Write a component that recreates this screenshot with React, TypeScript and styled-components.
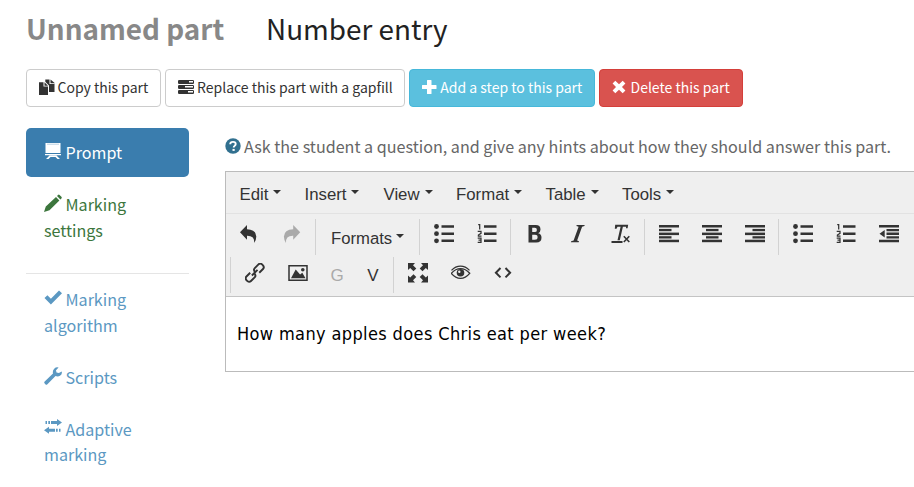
import React from 'react';
import styled, { createGlobalStyle, css } from 'styled-components';

const Global = createGlobalStyle`
  * { box-sizing: border-box; }
  html, body { margin: 0; padding: 0; background: #fff; overflow: hidden; }
  body { font-family: 'Noto Sans CJK SC', 'Open Sans', sans-serif; color: #333; }
`;

const Page = styled.div`
  width: 914px;
  height: 487px;
  padding: 8px 0 0 26px;
  overflow: hidden;
`;

const Header = styled.header`
  display: flex;
  height: 40px;
  gap: 42px;
  align-items: center;
  font-size: 27.85px;
  line-height: 40px;
  white-space: nowrap;
`;

const PartName = styled.div`
  width: 198px;
  font-weight: 700;
  color: #888;
`;

const PartType = styled.div`
  color: #222;
`;

const Actions = styled.div`
  display: flex;
  gap: 4px;
  margin-top: 21px;
`;

type Tone = 'plain' | 'info' | 'danger';
const tones = {
  plain: css`background: #fff; border-color: #ccc; color: #333;`,
  info: css`background: #5bc0de; border-color: #46b8da; color: #fff;`,
  danger: css`background: #d9534f; border-color: #d43f3a; color: #fff;`,
};

const ActionButton = styled.button<{ $tone: Tone; $width: number; $gap: number }>`
  display: flex;
  align-items: center;
  gap: ${p => p.$gap}px;
  width: ${p => p.$width}px;
  height: 38px;
  padding: 0 0 2px 12px;
  border: 1px solid;
  border-radius: 4px;
  font: 14px/22px 'Noto Sans CJK SC', sans-serif;
  white-space: nowrap;
  ${p => tones[p.$tone]}
`;

const Columns = styled.div`
  display: flex;
  margin-top: 21px;
`;

const Sidebar = styled.nav`
  flex: none;
  width: 163px;
  margin-right: 36px;
`;

const Tab = styled.a<{ $state?: 'active' | 'done' }>`
  display: block;
  padding: 12.3px 18px 11px;
  margin-bottom: 2.8px;
  border-radius: 5px;
  font-size: 16.1px;
  line-height: 25.7px;
  color: ${p => (p.$state === 'active' ? '#fff' : p.$state === 'done' ? '#3c763d' : '#5b98c2')};
  background: ${p => (p.$state === 'active' ? '#3a7dae' : 'transparent')};
  svg { margin-right: 3.5px; vertical-align: -1px; }
`;

const Divider = styled.div`
  height: 1px;
  margin: 18.4px 0 1.2px;
  background: #e5e5e5;
`;

const Main = styled.main`
  flex: none;
  width: 720px;
`;

const Help = styled.p`
  display: flex;
  align-items: center;
  gap: 3px;
  margin: 5px 0 12px;
  font-size: 16.13px;
  line-height: 26px;
  color: #666;
  white-space: nowrap;
`;

const Editor = styled.section`
  height: 201px;
  border: 1px solid #bbb;
  font-family: 'Liberation Sans', Arial, sans-serif;
`;

const MenuBar = styled.div`
  display: flex;
  height: 42px;
  padding-left: 13.5px;
  background: #efefef;
  border-bottom: 1px solid #e2e2e2;
`;

const MenuItem = styled.div<{ $width: number }>`
  display: flex;
  align-items: center;
  gap: 5px;
  width: ${p => p.$width}px;
  padding-top: 4px;
  font-size: 16.8px;
  line-height: 24px;
`;

const Caret = styled.i`
  width: 0;
  height: 0;
  margin-top: -6px;
  border: 4px solid transparent;
  border-top-color: #333;
  border-bottom-width: 0;
`;

const Toolbars = styled.div`
  height: 83px;
  padding-top: 5px;
  background: #efefef;
  border-bottom: 1px solid #c4c4c4;
`;

const ToolRow = styled.div<{ $indent: number }>`
  display: flex;
  height: 36px;
  margin-bottom: 2px;
  padding-left: ${p => p.$indent}px;
`;

const Group = styled.div<{ $first?: boolean }>`
  display: flex;
  padding: 0 2px 0 ${p => (p.$first ? 1 : 2)}px;
  border-left: ${p => (p.$first ? '0' : '1px solid #d2d2d2')};
`;

const Tool = styled.div<{ $top: number; $width?: number; $dim?: boolean }>`
  display: flex;
  justify-content: center;
  width: ${p => p.$width ?? 43}px;
  padding-top: ${p => p.$top}px;
  font-size: 17px;
  line-height: 24px;
  color: ${p => (p.$dim ? '#aaa' : '#333')};
`;

const FormatsTool = styled.div`
  display: flex;
  align-items: center;
  gap: 4px;
  width: 99px;
  padding: 3px 0 0 13px;
  font-size: 16.7px;
`;

const Content = styled.div`
  height: 74px;
  padding: 24px 0 0 11px;
  font: 18px/26px 'DejaVu Sans Condensed', 'DejaVu Sans', sans-serif;
  font-stretch: condensed;
  letter-spacing: 0.37px;
  color: #000;
`;

const Svg = ({ w = 20, h = 20, children }: { w?: number; h?: number; children: React.ReactNode }) => (
  <svg width={w} height={h} viewBox={`0 0 ${w} ${h}`} fill="currentColor" aria-hidden>
    {children}
  </svg>
);

const CopyIcon = () => (
  <Svg w={16} h={16}>
    <path d="M0 3.200h4.500v4.300H9V16H0zM5.500 3.200 9 6.700H5.500z" />
    <path d="M6.300.5h4.200V5H15.500v8h-5.500V6.500L6.300 2.800zM11.500.5 16 4.200h-4.500z" />
  </Svg>
);
const TasksIcon = () => (
  <Svg w={16} h={16}>
    <path fillRule="evenodd" d="M.8 1h14.400l.8.800v2.400l-.8.800H.8L0 4.200V1.800zM11 2v1.500h4V2zM.8 6h14.400l.8.800v2.400l-.8.800H.8L0 9.200V6.800zM7 7v1.500h8V7zM.8 11h14.400l.8.800v2.400l-.8.800H.8L0 14.200v-2.400zM10 12v1.500h5V12z" />
  </Svg>
);
const PlusIcon = () => (
  <Svg w={15} h={16}><path d="M5.500 1h3.500q.5 0 .5.500v4.500h4.500q.5 0 .5.500v3q0 .500-.5.500H9.500v4.500q0 .500-.5.500H5.500q-.5 0-.5-.500V10H.5Q0 10 0 9.500v-3Q0 6 .5 6H5V1.500q0-.5.500-.5z" /></Svg>
);
const CrossIcon = () => (
  <Svg w={14} h={16}><path d="M3.300 1.800 7 5.300l3.700-3.500 2.700 2.700L10 8l3.400 3.500-2.700 2.700L7 10.700l-3.700 3.500-2.700-2.700L4 8 .6 4.500z" /></Svg>
);
const BlackboardIcon = () => (
  <Svg w={18} h={18}>
    <path d="M1.500 1h15v10h-15zM1 12h16v1.200H1zM5.500 13.500h7L16 17h-2.500l-2-2h-5l-2 2H2z" />
    <path d="M3 2.200h12" stroke="#8bb2d0" strokeWidth=".6" />
  </Svg>
);
const PencilIcon = () => (
  <Svg w={18} h={18}><path d="M14 1q.8-.8 1.600 0l1.800 1.800q.8.800 0 1.600L16.400 5.400 13 2zM12 3 15.400 6.400 5.500 16.200 0 18l1.800-5.400z" /></Svg>
);
const CheckIcon = () => (
  <Svg w={18} h={18}><path d="M.5 9 3.400 6.200l3.500 3.500L15 1.400 18 4.200 6.900 15.600z" /></Svg>
);
const WrenchIcon = () => (
  <Svg w={18} h={18}><path d="M17.700 4.500q.8 2.600-1.700 4.200-2 1.200-4.500.3L3.400 17.200q-1 1-2 0l-.7-.7q-1-1 0-2L9 6.400Q8.300 3.900 10.200 1.800 12-.2 14.600.5L12 3.200l.5 2.300 2.400.6z" /></Svg>
);
const TransferIcon = () => (
  <Svg w={18} h={18}>
    <path d="M1.500 2H3v3H1.500zM4.300 2H6v3H4.300zM7 2h6V0l5 3.500-5 3.500V5H7zM16.500 9.700H15v3h1.500zM13.700 9.700H12v3h1.700zM11 9.700H5v-2l-5 3.500 5 3.500v-2h6z" />
  </Svg>
);
const HelpIcon = () => (
  <Svg w={16} h={16}>
    <circle cx="8" cy="8" r="7.700" fill="#31708f" />
    <path d="M5.200 6.300Q5.300 3.900 8 3.900t2.700 2.200Q10.700 7.300 9.500 8q-.8.500-.8 1.400" fill="none" stroke="#fff" strokeWidth="1.900" />
    <path d="M7.500 10.900h2.200v2H7.500z" fill="#fff" />
  </Svg>
);

const Undo = () => <Svg><path d="M1 8.200 8 1v4.200q9 .3 9.300 7.300 0 3.200-2.100 6.500.6-7.400-7.200-7.200v4z" /></Svg>;
const Redo = () => <Svg><path d="M18.200 8.200 11.200 1v4.200q-9 .3-9.300 7.300 0 3.200 2.100 6.500-.6-7.400 7.200-7.200v4z" /></Svg>;
const Bullets = () => (
  <Svg><circle cx="2.500" cy="2.500" r="2.400" /><circle cx="2.500" cy="9.700" r="2.400" /><circle cx="2.500" cy="16.800" r="2.400" /><path d="M7.500 1.200H20v2.600H7.500zM7.500 8.400H20V11H7.500zM7.500 15.500H20v2.600H7.500z" /></Svg>
);
const Numbers = () => (
  <Svg>
    <path d="M7 1.200h12.500v2.600H7zM7 8.400h12.500V11H7zM7 15.500h12.500v2.600H7z" />
    <path d="M1.200.7h1.500v4.800M.7 7.300H4v2.100L1.400 11v1.200H4.500M.7 14H4v4.300H.7M1.500 16.200H4" fill="none" stroke="currentColor" strokeWidth="1.250" />
  </Svg>
);
const Bold = () => <Svg><path fillRule="evenodd" d="M3.500 1h7.200q4.800 0 4.800 4.400 0 2.800-2.300 3.900 3.300.8 3.300 4.500 0 4.700-5.200 4.700H3.500zM7.200 3.800v4.300h2.400q2.300 0 2.300-2.200T9.600 3.800zM7.200 10.800v4.900h2.600q2.800 0 2.800-2.500t-2.800-2.400z" /></Svg>;
const Italic = () => <Svg><path d="M8.700 1h8l-.3 1-2.300.7-5 13.800 1.900.7-.3 1H2.900l.3-1 2.400-.7 5-13.800L8.400 2z" /></Svg>;
const ClearFormat = () => (
  <Svg><path d="M4.200.8h13l-.6 3.500h-1.600l.1-1.600h-3.200l-3.100 13.500H6.500L9.600 2.700H6.500L5.500 4.700H3.800zM.5 17h11v2H.5z" /><path d="m12.800 12.300 5.500 5.700m0-5.700L12.800 18" stroke="currentColor" strokeWidth="1.600" /></Svg>
);
const alignOffsets = { left: 0, center: 4, right: 7.500 };
const Align = ({ side }: { side: 'left' | 'center' | 'right' }) => (
  <Svg>
    {[1, 8.600, 15.700].map(y => <rect key={y} y={y} width="20" height="2.500" />)}
    {[4.900, 12.200].map(y => <rect key={y} x={alignOffsets[side]} y={y} width="12.500" height="2.300" />)}
  </Svg>
);
const Outdent = () => (
  <Svg>
    <path d="M0 1h20v2.500H0zM7.500 4.900H20v2.300H7.500zM7.500 8.600H20v2.500H7.500zM7.500 12.200H20v2.300H7.500zM0 15.700h20v2.500H0zM.5 9.700 5.700 6v7.400z" />
  </Svg>
);
const LinkIcon = () => (
  <Svg>
    <g fill="none" stroke="currentColor" strokeWidth="1.900" transform="rotate(-45 10 10)">
      <path d="M6.800 6.400H1.500q-2.600 0-2.600 3.200t2.600 3.200h5.200q2.500 0 2.500-3" />
      <path d="M13.200 12.800h5.300q2.600 0 2.600-3.200t-2.600-3.200h-5.200q-2.500 0-2.500 3" />
      <path d="M6 9.600h8" />
    </g>
  </Svg>
);
const ImageIcon = () => (
  <Svg>
    <path d="M1 2.700h18v14.500H1z" fill="none" stroke="currentColor" strokeWidth="1.500" />
    <path d="m3 15.200 4.700-8.800 4.400 5 2.200-1.700 3.200 5.500z" /><circle cx="14.800" cy="6.700" r="1.800" />
  </Svg>
);
const Fullscreen = () => (
  <Svg>
    <path d="M0 0h7L5 2.200l3.300 3.300-2.800 2.800L2.200 5 0 7z" />
    <path d="M20 0h-7l2 2.200-3.300 3.300 2.800 2.800L17.800 5 20 7zM0 19.500h7l-2-2.200L8.300 14l-2.800-2.800-3.300 3.300-2.200-2zM20 19.500h-7l2-2.200-3.300-3.300 2.800-2.800 3.300 3.300 2.200-2z" />
  </Svg>
);
const Eye = () => (
  <Svg>
    <path d="M.5 7.400Q4.500 3.200 9.500 3.200t9 4.200" fill="none" stroke="currentColor" strokeWidth="1.300" />
    <path d="M.3 10.300Q4.500 5.600 9.500 5.600t9.200 4.700Q14.500 15.300 9.500 15.300T.3 10.300z" fill="none" stroke="currentColor" strokeWidth="1.300" />
    <circle cx="9.500" cy="9.700" r="3.800" /><circle cx="8.300" cy="8.700" r="1.200" fill="#efefef" />
  </Svg>
);
const Code = () => (
  <Svg><path d="M6.500 5 1.900 9.700l4.600 4.700M11.500 5l4.600 4.700-4.600 4.700" fill="none" stroke="currentColor" strokeWidth="2" /></Svg>
);

const menus: [string, number][] = [['Edit', 65], ['Insert', 79], ['View', 72.500], ['Format', 89.500], ['Table', 76.500], ['Tools', 70]];

export default function App() {
  return (
    <>
      <Global />
      <Page>
        <Header><PartName>Unnamed part</PartName><PartType>Number entry</PartType></Header>
        <Actions>
          <ActionButton $tone="plain" $width={135} $gap={2.500}><CopyIcon />Copy this part</ActionButton>
          <ActionButton $tone="plain" $width={240} $gap={3}><TasksIcon />Replace this part with a gapfill</ActionButton>
          <ActionButton $tone="info" $width={186} $gap={3.300}><PlusIcon />Add a step to this part</ActionButton>
          <ActionButton $tone="danger" $width={144} $gap={4.500}><CrossIcon />Delete this part</ActionButton>
        </Actions>
        <Columns>
          <Sidebar>
            <Tab $state="active"><BlackboardIcon />Prompt</Tab>
            <Tab $state="done"><PencilIcon />Marking settings</Tab>
            <Divider />
            <Tab><CheckIcon />Marking algorithm</Tab>
            <Tab><WrenchIcon />Scripts</Tab>
            <Tab><TransferIcon />Adaptive marking</Tab>
          </Sidebar>
          <Main>
            <Help><HelpIcon />Ask the student a question, and give any hints about how they should answer this part.</Help>
            <Editor>
              <MenuBar>
                {menus.map(([name, width]) => <MenuItem key={name} $width={width}>{name}<Caret /></MenuItem>)}
              </MenuBar>
              <Toolbars>
                <ToolRow $indent={0}>
                  <Group $first><Tool $top={5}><Undo /></Tool><Tool $top={5} $dim><Redo /></Tool></Group>
                  <Group><FormatsTool>Formats<Caret /></FormatsTool></Group>
                  <Group><Tool $top={5}><Bullets /></Tool><Tool $top={5}><Numbers /></Tool></Group>
                  <Group><Tool $top={5}><Bold /></Tool><Tool $top={5}><Italic /></Tool><Tool $top={5}><ClearFormat /></Tool></Group>
                  <Group><Tool $top={5}><Align side="left" /></Tool><Tool $top={5}><Align side="center" /></Tool><Tool $top={5}><Align side="right" /></Tool></Group>
                  <Group><Tool $top={5}><Bullets /></Tool><Tool $top={5}><Numbers /></Tool><Tool $top={5}><Outdent /></Tool></Group>
                </ToolRow>
                <ToolRow $indent={4}>
                  <Group><Tool $top={6}><LinkIcon /></Tool><Tool $top={6}><ImageIcon /></Tool><Tool $top={7} $width={36} $dim>G</Tool><Tool $top={7} $width={36}>V</Tool></Group>
                  <Group><Tool $top={6}><Fullscreen /></Tool><Tool $top={6}><Eye /></Tool><Tool $top={6}><Code /></Tool></Group>
                </ToolRow>
              </Toolbars>
              <Content>How many apples does Chris eat per week?</Content>
            </Editor>
          </Main>
        </Columns>
      </Page>
    </>
  );
}
